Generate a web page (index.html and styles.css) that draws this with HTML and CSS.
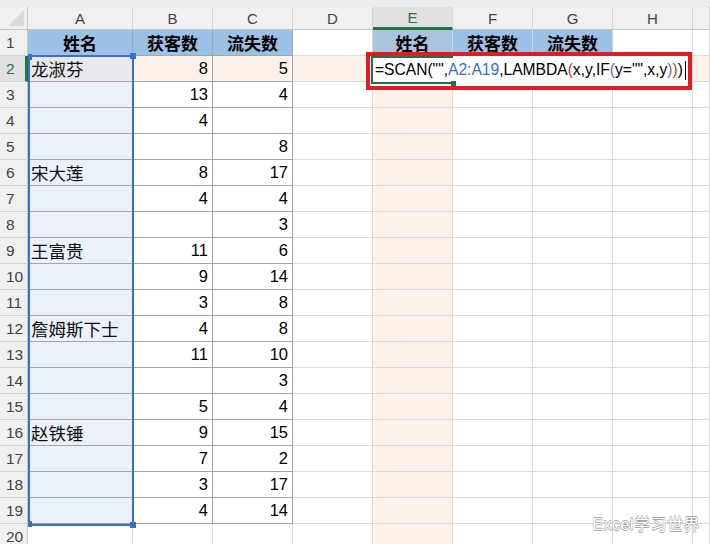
FILE: index.html
```html
<!DOCTYPE html>
<html lang="zh">
<head>
<meta charset="utf-8">
<title>SCAN</title>
<link rel="stylesheet" href="styles.css">
</head>
<body>
<div class="page">
  <div class="strip"></div>
  <div class="sheet">
    <div class="corner"><i class="tri"></i></div><div class="ch">A</div><div class="ch">B</div><div class="ch">C</div><div class="ch">D</div><div class="ch csel">E</div><div class="ch">F</div><div class="ch">G</div><div class="ch">H</div><div class="ch"></div>

    <div class="rh">1</div><div class="c t h">姓名</div><div class="c t h">获客数</div><div class="c t h">流失数</div><div class="c"></div><div class="c hb he">姓名</div><div class="c hb">获客数</div><div class="c hb">流失数</div><div class="c"></div><div class="c"></div>

    <div class="rh rsel">2</div><div class="c t a2 nm">龙淑芬</div><div class="c t pk n">8</div><div class="c t pk n">5</div><div class="c pk"></div><div class="c pk"></div><div class="c pk"></div><div class="c pk"></div><div class="c pk"></div><div class="c pk"></div>

    <div class="rh">3</div><div class="c t rg nm"></div><div class="c t n">13</div><div class="c t n">4</div><div class="c"></div><div class="c pk"></div><div class="c"></div><div class="c"></div><div class="c"></div><div class="c"></div>

    <div class="rh">4</div><div class="c t rg nm"></div><div class="c t n">4</div><div class="c t n"></div><div class="c"></div><div class="c pk"></div><div class="c"></div><div class="c"></div><div class="c"></div><div class="c"></div>

    <div class="rh">5</div><div class="c t rg nm"></div><div class="c t n"></div><div class="c t n">8</div><div class="c"></div><div class="c pk"></div><div class="c"></div><div class="c"></div><div class="c"></div><div class="c"></div>

    <div class="rh">6</div><div class="c t rg nm">宋大莲</div><div class="c t n">8</div><div class="c t n">17</div><div class="c"></div><div class="c pk"></div><div class="c"></div><div class="c"></div><div class="c"></div><div class="c"></div>

    <div class="rh">7</div><div class="c t rg nm"></div><div class="c t n">4</div><div class="c t n">4</div><div class="c"></div><div class="c pk"></div><div class="c"></div><div class="c"></div><div class="c"></div><div class="c"></div>

    <div class="rh">8</div><div class="c t rg nm"></div><div class="c t n"></div><div class="c t n">3</div><div class="c"></div><div class="c pk"></div><div class="c"></div><div class="c"></div><div class="c"></div><div class="c"></div>

    <div class="rh">9</div><div class="c t rg nm">王富贵</div><div class="c t n">11</div><div class="c t n">6</div><div class="c"></div><div class="c pk"></div><div class="c"></div><div class="c"></div><div class="c"></div><div class="c"></div>

    <div class="rh">10</div><div class="c t rg nm"></div><div class="c t n">9</div><div class="c t n">14</div><div class="c"></div><div class="c pk"></div><div class="c"></div><div class="c"></div><div class="c"></div><div class="c"></div>

    <div class="rh">11</div><div class="c t rg nm"></div><div class="c t n">3</div><div class="c t n">8</div><div class="c"></div><div class="c pk"></div><div class="c"></div><div class="c"></div><div class="c"></div><div class="c"></div>

    <div class="rh">12</div><div class="c t rg nm">詹姆斯下士</div><div class="c t n">4</div><div class="c t n">8</div><div class="c"></div><div class="c pk"></div><div class="c"></div><div class="c"></div><div class="c"></div><div class="c"></div>

    <div class="rh">13</div><div class="c t rg nm"></div><div class="c t n">11</div><div class="c t n">10</div><div class="c"></div><div class="c pk"></div><div class="c"></div><div class="c"></div><div class="c"></div><div class="c"></div>

    <div class="rh">14</div><div class="c t rg nm"></div><div class="c t n"></div><div class="c t n">3</div><div class="c"></div><div class="c pk"></div><div class="c"></div><div class="c"></div><div class="c"></div><div class="c"></div>

    <div class="rh">15</div><div class="c t rg nm"></div><div class="c t n">5</div><div class="c t n">4</div><div class="c"></div><div class="c pk"></div><div class="c"></div><div class="c"></div><div class="c"></div><div class="c"></div>

    <div class="rh">16</div><div class="c t rg nm">赵铁锤</div><div class="c t n">9</div><div class="c t n">15</div><div class="c"></div><div class="c pk"></div><div class="c"></div><div class="c"></div><div class="c"></div><div class="c"></div>

    <div class="rh">17</div><div class="c t rg nm"></div><div class="c t n">7</div><div class="c t n">2</div><div class="c"></div><div class="c pk"></div><div class="c"></div><div class="c"></div><div class="c"></div><div class="c"></div>

    <div class="rh">18</div><div class="c t rg nm"></div><div class="c t n">3</div><div class="c t n">17</div><div class="c"></div><div class="c pk"></div><div class="c"></div><div class="c"></div><div class="c"></div><div class="c"></div>

    <div class="rh">19</div><div class="c t rg nm"></div><div class="c t n">4</div><div class="c t n">14</div><div class="c"></div><div class="c pk"></div><div class="c"></div><div class="c"></div><div class="c"></div><div class="c"></div>

    <div class="rh">20</div><div class="c"></div><div class="c"></div><div class="c"></div><div class="c"></div><div class="c pk"></div><div class="c"></div><div class="c"></div><div class="c"></div><div class="c"></div>
  </div>

  <div class="range">
    <i class="hd tl"></i><i class="hd tr"></i><i class="hd bl"></i><i class="hd br"></i>
  </div>

  <div class="edit">
    <div class="cellbox"><i class="fill"></i></div>
    <div class="formula">=SCAN("",<span class="ref">A2:A19</span>,LAMBDA<span class="p1">(</span>x,y,IF<span class="p2">(</span>y="",x,y<span class="p2">)</span><span class="p1">)</span>)<span class="caret"></span></div>
  </div>

  <div class="mark"></div>

  <div class="wm">Excel学习世界</div>
</div>
</body>
</html>
```

FILE: styles.css
```css
* { box-sizing: border-box; }
html, body { margin: 0; padding: 0; }
body {
  width: 710px;
  height: 544px;
  overflow: hidden;
  background: #ffffff;
  font-family: "Liberation Sans", "Noto Sans CJK SC", sans-serif;
  color: #000;
}
.page {
  position: relative;
  width: 710px;
  height: 544px;
  overflow: hidden;
}
.strip {
  height: 7px;
  background: #e8edef;
}
.sheet {
  display: grid;
  grid-template-columns: 28px 105px 80px 80px 80px 80px 80px 80px 80px 17px;
  grid-template-rows: 23px repeat(20, 26px);
}
.corner {
  background: #f0f0f0;
  border-right: 1px solid #c6c6c6;
  border-bottom: 1px solid #c6c6c6;
  display: flex;
  align-items: flex-end;
  justify-content: flex-end;
  padding: 0 3px 3px 0;
  position: relative;
  z-index: 2;
}
.tri {
  display: block;
  width: 0;
  height: 0;
  border-left: 16px solid transparent;
  border-bottom: 16px solid #d9d9d9;
}
.ch {
  background: #f0f0f0;
  border-right: 1px solid #d4d4d4;
  border-bottom: 1px solid #c6c6c6;
  font-size: 15px;
  color: #444;
  display: flex;
  align-items: center;
  justify-content: center;
  padding-top: 1px;
}
.ch.csel {
  background: #e1e1e1;
  color: #217346;
  border-bottom: 3px solid #217346;
}
.rh {
  background: #f0f0f0;
  border-right: 1px solid #c6c6c6;
  border-bottom: 1px solid #d4d4d4;
  font-size: 15.5px;
  color: #444;
  display: flex;
  align-items: center;
  padding-left: 6px;
  position: relative;
  z-index: 2;
}
.rh.rsel {
  background: #e1e1e1;
  color: #217346;
  border-right: 3px solid #217346;
}
.c {
  border-right: 1px solid #dadada;
  border-bottom: 1px solid #dadada;
  display: flex;
  align-items: center;
  font-size: 16px;
  white-space: nowrap;
}
.c.t {
  border-right-color: #a6a6a6;
  border-bottom-color: #a6a6a6;
}
.h, .hb {
  background: #9bc2e6;
  justify-content: center;
  font-family: "Noto Sans CJK SC", sans-serif;
  font-weight: 700;
  font-size: 17px;
}
.hb {
  border-right-color: #c6d9ec;
  border-bottom-color: #c6d9ec;
}
.hb.he { background: #a9c4dd; }
.n {
  justify-content: flex-end;
  padding-right: 4px;
  font-size: 16.5px;
}
.nm {
  padding-left: 3px;
  font-family: "Noto Sans CJK SC", sans-serif;
  font-size: 17.5px;
  color: #111;
}
.pk { background: #fdf2ea; }
.rg { background: #eaf1f9; }
.a2 { background: #e8e8ed; }

.range {
  position: absolute;
  left: 28px;
  top: 55px;
  width: 106px;
  height: 471px;
  border: 2px solid #3b6fcd;
  z-index: 1;
}
.hd {
  position: absolute;
  width: 6px;
  height: 6px;
  background: #3b6fcd;
}
.hd.tl { left: -2px; top: -3px; width: 4px; }
.hd.bl { left: -2px; bottom: -3px; width: 4px; }
.hd.tr { right: -4px; top: -4px; }
.hd.br { right: -4px; bottom: -4px; }

.edit {
  position: absolute;
  left: 370px;
  top: 56px;
  width: 318px;
  height: 30px;
  background: #ffffff;
  z-index: 3;
}
.cellbox {
  position: absolute;
  left: 1px;
  top: 0;
  width: 82px;
  height: 28px;
  border: 2px solid #217346;
  border-right: none;
}
.fill {
  position: absolute;
  right: -3px;
  bottom: -4px;
  width: 5px;
  height: 5px;
  background: #217346;
}
.formula {
  position: absolute;
  left: 5px;
  top: 4px;
  font-family: "Liberation Sans", sans-serif;
  font-size: 15.6px;
  line-height: 20px;
  color: #000;
  white-space: nowrap;
  display: flex;
  align-items: center;
}
.ref { color: #3a6ecf; }
.p1 { color: #d2352f; }
.p2 { color: #8060b0; }
.caret {
  display: inline-block;
  width: 1px;
  height: 19px;
  margin-left: 2px;
  background: #000;
}
.mark {
  position: absolute;
  left: 366px;
  top: 52px;
  width: 326px;
  height: 38px;
  border: 4px solid #e31b23;
  z-index: 4;
}
.wm {
  position: absolute;
  right: 10px;
  bottom: 9px;
  font-family: "Liberation Sans", "Noto Sans CJK SC", sans-serif;
  font-size: 16px;
  color: #ffffff;
  text-shadow: 0.6px 0 0 #a8a8a8, -0.6px 0 0 #a8a8a8, 0 0.6px 0 #a8a8a8, 0 -0.6px 0 #a8a8a8;
  z-index: 5;
  letter-spacing: 0.5px;
}
```
